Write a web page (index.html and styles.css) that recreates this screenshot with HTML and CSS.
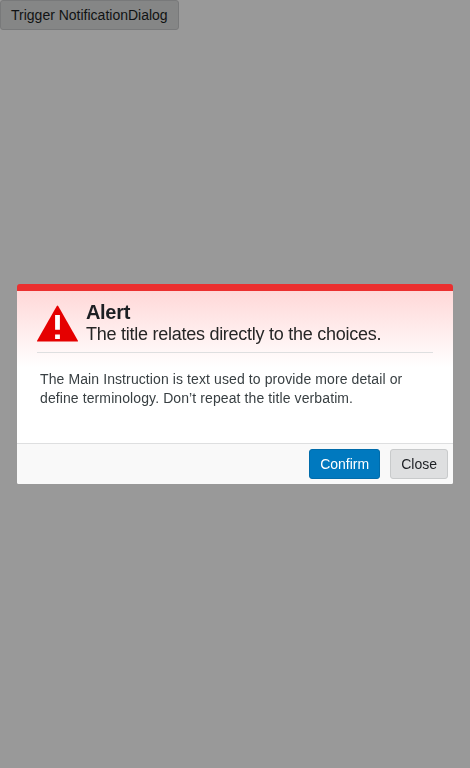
FILE: index.html
```html
<!DOCTYPE html>
<html lang="en">
<head>
<meta charset="utf-8">
<title>NotificationDialog</title>
<link rel="stylesheet" href="styles.css">
</head>
<body>
<button class="button">Trigger NotificationDialog</button>
<div class="overlay">
  <section class="dialog" role="alertdialog" aria-labelledby="title">
    <header class="dialog-header">
      <div class="header-row">
        <svg class="icon" viewBox="0 0 42 37" width="42" height="37" aria-hidden="true">
          <path fill="#e50000" d="M19.8.9Q20.5-.1 21.2.9L40.8 35.6Q41.3 36.5 40.4 36.5H.6Q-.3 36.5.2 35.6Z"/>
          <path fill="#fff" d="M18.1 10h4.8v14.8h-4.8zM18.1 29.4h4.8V34h-4.8z"/>
        </svg>
        <div class="heading">
          <h2 class="status">Alert</h2>
          <p class="title" id="title">The title relates directly to the choices.</p>
        </div>
      </div>
    </header>
    <div class="dialog-body">The Main Instruction is text used to provide more detail or define terminology. Don’t repeat the title verbatim.</div>
    <footer class="dialog-footer">
      <button class="button primary">Confirm</button>
      <button class="button">Close</button>
    </footer>
  </section>
</div>
</body>
</html>
```
FILE: styles.css
```css
* { box-sizing: border-box; }
body { margin: 0; background: #fff; font-family: "Liberation Sans", Arial, sans-serif; color: #1c1f23; }
.button { display: block; height: 30px; margin: 0; padding: 0 10px; border: 1px solid #c8cacb; border-radius: 3px; background: #dedfe0; color: #1c1f23; font: 14px/28px "Liberation Sans", Arial, sans-serif; white-space: nowrap; }
.primary { background: #0079bf; border-color: #006cab; color: #fff; }
.overlay { position: fixed; inset: 0; display: flex; align-items: center; justify-content: center; background: rgba(0, 0, 0, .4); }
.dialog { width: 436px; height: 200px; display: flex; flex-direction: column; border-top: 7px solid #eb2f2f; border-radius: 3px 3px 2px 2px; background: linear-gradient(#ffd8d8, #fff 76px); overflow: hidden; }
.dialog-header { padding: 10px 20px 0; }
.header-row { display: flex; height: 52px; border-bottom: 1px solid #dedfe0; }
.icon { flex: none; margin-top: 4px; }
.heading { margin-left: 7px; }
.status { margin: 0; font-size: 20px; line-height: 22px; letter-spacing: -.32px; }
.title { margin: 0; color: #262626; font-size: 18px; line-height: 22px; letter-spacing: -.26px; white-space: nowrap; }
.dialog-body { flex: 1; padding: 17px 23px 0; color: #383f42; font-size: 14px; line-height: 19px; letter-spacing: .1px; }
.dialog-footer { display: flex; justify-content: flex-end; gap: 10px; height: 41px; padding: 5px; border-top: 1px solid #dedfe0; background: #f9f9f9; }
```
